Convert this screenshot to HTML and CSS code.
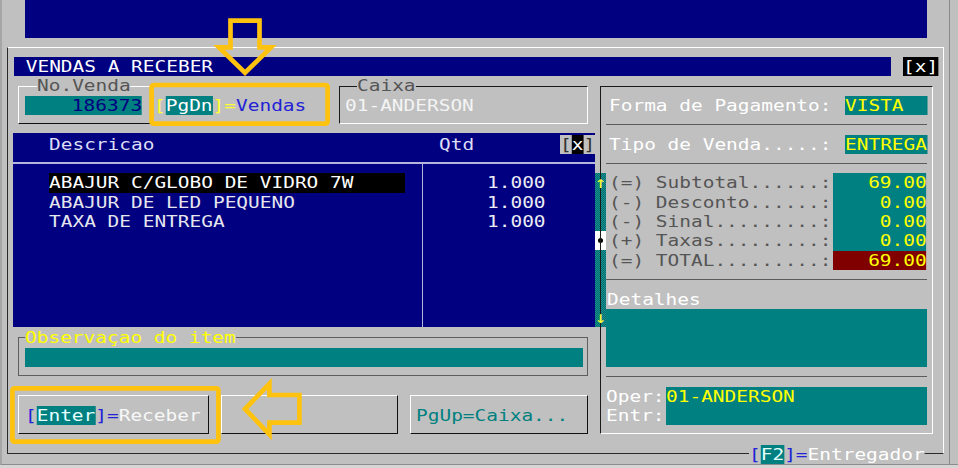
FILE: index.html
```html
<!DOCTYPE html>
<html lang="pt-BR">
<head>
  <meta charset="utf-8">
  <title>Vendas a receber</title>
  <link rel="stylesheet" href="styles.css">
</head>
<body>
  <div class="scr">
    <div class="desk"></div>
    <div class="dlg"></div>
    <div class="edge"></div>

    <div class="dlg-title"><span class="t"> VENDAS A RECEBER</span></div>
    <span class="t dlg-close">[x]</span>

    <!-- numero da venda -->
    <div class="box-venda"></div>
    <span class="t lbl-venda">No.Venda</span>
    <span class="t fld-venda">    186373</span>
    <span class="t hint-pgdn">[<span class="key">PgDn</span>]=<span class="c-blu">Vendas</span></span>

    <!-- caixa -->
    <div class="box-caixa"></div>
    <span class="t lbl-caixa">Caixa</span>
    <span class="t val-caixa">01-ANDERSON</span>

    <!-- itens da venda -->
    <div class="list"></div>
    <div class="list-hsep"></div>
    <div class="list-vsep"></div>
    <span class="t list-h desc">Descricao</span>
    <span class="t list-h qtd">Qtd</span>
    <span class="t list-x">[<b>x</b>]</span>
    <span class="t item row9 sel">ABAJUR C/GLOBO DE VIDRO 7W    </span>
    <span class="t item row10">ABAJUR DE LED PEQUENO</span>
    <span class="t item row11">TAXA DE ENTREGA</span>
    <span class="t qty row9">1.000</span>
    <span class="t qty row10">1.000</span>
    <span class="t qty row11">1.000</span>
    <div class="sbar">
      <span class="t sb-up">↑</span>
      <div class="sb-thumb"></div>
      <span class="t sb-dn">↓</span>
    </div>

    <!-- observacao -->
    <div class="box-obs"></div>
    <span class="t lbl-obs">Observaçao do item</span>
    <div class="fld-obs"></div>

    <!-- botoes -->
    <div class="btn enter"></div>
    <div class="btn blank"></div>
    <div class="btn caixa"></div>
    <span class="t btn-enter-t"><span class="c-blu">[</span><span class="key">Enter</span><span class="c-blu">]=</span>Receber</span>
    <span class="t btn-caixa-t">PgUp=Caixa...</span>

    <!-- pagamento -->
    <div class="box-pay"></div>
    <span class="t pay-k row5">Forma de Pagamento:</span>
    <span class="t pay-v row5">VISTA  </span>
    <div class="pay-sep row6"></div>
    <span class="t pay-k row7">Tipo de Venda.....:</span>
    <span class="t pay-v row7">ENTREGA</span>
    <div class="pay-sep row8"></div>
    <span class="t sum-k row9">(=) Subtotal......:</span>
    <span class="t sum-v row9">   69.00</span>
    <span class="t sum-k row10">(-) Desconto......:</span>
    <span class="t sum-v row10">    0.00</span>
    <span class="t sum-k row11">(-) Sinal.........:</span>
    <span class="t sum-v row11">    0.00</span>
    <span class="t sum-k row12">(+) Taxas.........:</span>
    <span class="t sum-v row12">    0.00</span>
    <span class="t sum-k row13">(=) TOTAL.........:</span>
    <span class="t sum-v row13 total">   69.00</span>
    <div class="pay-sep row14"></div>
    <span class="t pay-det">Detalhes</span>
    <div class="pay-det-box"></div>
    <div class="pay-sep row19"></div>
    <span class="t pay-oper">Oper:</span>
    <span class="t pay-entr">Entr:</span>
    <div class="pay-who"><span class="t">01-ANDERSON</span></div>

    <span class="t f2"><span class="c-blu">[</span><span class="key">F2</span><span class="c-blu">]=</span>Entregador</span>
  </div>

  <svg class="marks" width="958" height="468" viewBox="0 0 958 468">
    <g fill="none" stroke="#ffc20e" stroke-width="4.7" stroke-linejoin="miter">
      <rect x="151.6" y="85" width="176" height="38.7" rx="2"/>
      <rect x="12.4" y="388.4" width="206" height="53.3" rx="2"/>
      <path d="M230.5 20.6H259.5V47.4H271L245 72.7L219 47.4H230.5Z"/>
      <path d="M245 409L269.4 383.9V395H299.4V422.7H269.4V434.4Z"/>
    </g>
  </svg>
</body>
</html>
```

FILE: styles.css
```css
* { box-sizing: border-box; }
html, body { margin: 0; height: 100%; }
body { position: relative; overflow: hidden; background: #d6d6d6; color: #fff; font: 16.5px/19.4px "DejaVu Sans Mono", monospace; }

/* text screen: 82 x 24 cells of 11.71 x 19.4, the first row is cut at the top */
.scr { display: grid; grid-template-columns: repeat(82, 11.71px); grid-template-rows: 18.2px repeat(23, 19.4px); width: 958px; overflow: hidden; background: #c0c0c0; border-left: 2px solid #a6a6a6; border-bottom: 1px solid #8c8c8c; }

/* the mono font is narrower than a cell, so stretch each run to fill its cells */
.t { display: inline-block; justify-self: start; align-self: start; white-space: pre; transform: scaleX(1.1788); transform-origin: 0 0; }
.key { background: #008080; color: #e6ffff; }
.c-blu { color: #2222d6; }

.row5 { grid-row: 6; } .row6 { grid-row: 7; } .row7 { grid-row: 8; } .row8 { grid-row: 9; }
.row9 { grid-row: 10; } .row10 { grid-row: 11; } .row11 { grid-row: 12; } .row12 { grid-row: 13; }
.row13 { grid-row: 14; } .row14 { grid-row: 15; } .row19 { grid-row: 20; }

.desk { grid-area: 1 / 3 / 3 / 80; background: #000080; }
.edge { grid-area: 1 / 82 / 25 / 83; margin-left: -0.8px; border-left: 1px solid #8a8a8a; }
.dlg { grid-area: 3 / 1 / 25 / 82; margin: 9px 6px 10px 4.5px; border: 1px solid; border-color: #fff #fff #2a2a2a #2a2a2a; }
.dlg-title { grid-area: 4 / 2 / 5 / 77; background: #000080; }
.dlg-close { grid-area: 4 / 78; background: #000; }

.box-venda { grid-area: 5 / 2 / 8 / 29; margin: 9.5px 3px 10.1px 4.6px; border: 1px solid; border-color: #fff #111 #111 #fff; }
.lbl-venda { grid-area: 5 / 4; background: #c0c0c0; color: #555; }
.fld-venda { grid-area: 6 / 3; background: #008080; color: #000080; }
.hint-pgdn { grid-area: 6 / 14; color: #ffff30; }
.hint-pgdn .key { color: #fff; }

.box-caixa { grid-area: 5 / 29 / 8 / 52; margin: 9.5px 10.4px 10.1px 9.6px; border: 1px solid; border-color: #1a1a1a #fff #fff #1a1a1a; }
.lbl-caixa { grid-area: 5 / 31; margin-left: 3.5px; background: #c0c0c0; color: #555; }
.val-caixa { grid-area: 6 / 30; margin-left: 3.5px; color: #f4f4f4; }

.list { grid-area: 8 / 2 / 18 / 52; margin: -1.3px 4.2px 1px -1px; background: #000080; }
.list-hsep { grid-area: 9 / 2 / 10 / 52; align-self: start; height: 2px; margin: 8px 4.2px 0 -1px; background: #b4b4dc; }
.list-vsep { grid-area: 9 / 37 / 18 / 38; justify-self: start; width: 1px; margin: 9px 0 1px -1.3px; background: #b4b4dc; }
.list-h { grid-row: 8; color: #dedef6; }
.list-h.desc { grid-column: 5; }
.list-h.qtd { grid-column: 38; margin-left: 4px; }
.list-x { grid-area: 8 / 49; margin-left: -4px; background: #c0c0c0; color: #333; }
.list-x b { font-weight: normal; background: #000; color: #fff; }
.item { grid-column: 5; color: #e6e6ee; }
.item.sel { background: #000; color: #fff; padding-right: 4px; }
.qty { grid-column: 42; margin-left: 5px; color: #ececf4; }

.sbar { grid-area: 10 / 51 / 18 / 52; margin: 0 -7.5px 1.5px 7.5px; display: grid; grid-template-rows: repeat(8, 1fr); background: #0e8585 repeating-conic-gradient(#066a6a 0 25%, #179393 0 50%) 0 0 / 2px 2px; }
.sb-up, .sb-dn { color: #ffff33; }
.sb-thumb { grid-row: 4; display: flex; align-items: center; justify-content: center; background: #fff; }
.sb-thumb::before { content: ""; width: 5px; height: 5px; margin-left: -1px; border-radius: 50%; background: #000; }
.sb-dn { grid-row: 8; }

.box-obs { grid-area: 18 / 2 / 21 / 52; margin: 8.1px 10.4px 10.3px 4.6px; border: 1px solid #5e5e5e; }
.lbl-obs { grid-area: 18 / 3; background: #c0c0c0; color: #ffff00; }
.fld-obs { grid-area: 19 / 3 / 20 / 51; margin-right: 4.2px; background: #008080; }

.btn { grid-row: 21 / 24; margin-top: 8.7px; margin-bottom: 10.5px; border: 1px solid; border-color: #fff #111 #111 #fff; }
.btn.enter { grid-column: 2 / 19; margin-left: 4.6px; margin-right: 3.8px; }
.btn.blank { grid-column: 19 / 35; margin-left: 8.7px; margin-right: 1.6px; }
.btn.caixa { grid-column: 36 / 52; margin-left: -1.6px; margin-right: 10.4px; }
.btn-enter-t { grid-area: 22 / 3; color: #f8f8f8; }
.btn-caixa-t { grid-area: 22 / 36; margin-left: 4.5px; color: #008080; }

.box-pay { grid-area: 5 / 52 / 24 / 81; margin: 9.5px 5.3px 10.5px 1px; border: 1px solid; border-color: #1a1a1a #fff #fff #1a1a1a; }
.pay-k { grid-column: 53; margin-left: -2px; color: #fff; }
.pay-v { grid-column: 73; background: #008080; color: #ffff00; }
.pay-sep { grid-column: 52 / 80; align-self: center; height: 1px; margin-left: 7.5px; background: #5c5c5c; }
.sum-k { grid-column: 53; margin-left: -2px; color: #555; }
.sum-v { grid-column: 72; background: #008080; color: #ffff00; }
.sum-v.total { background: #800000; }
.pay-det { grid-area: 16 / 53; margin-left: -4px; }
.pay-det-box { grid-area: 17 / 52 / 20 / 80; margin-left: 7.5px; background: #008080; }
.pay-oper { grid-area: 21 / 53; margin-left: -4.5px; }
.pay-entr { grid-area: 22 / 53; margin-left: -4.5px; }
.pay-who { grid-area: 21 / 57 / 23 / 80; margin-left: 8.3px; background: #008080; color: #ffff00; }

.f2 { grid-area: 24 / 65; margin-left: -2px; background: #c0c0c0; }

.marks { position: absolute; left: 0; top: 0; pointer-events: none; }
```
